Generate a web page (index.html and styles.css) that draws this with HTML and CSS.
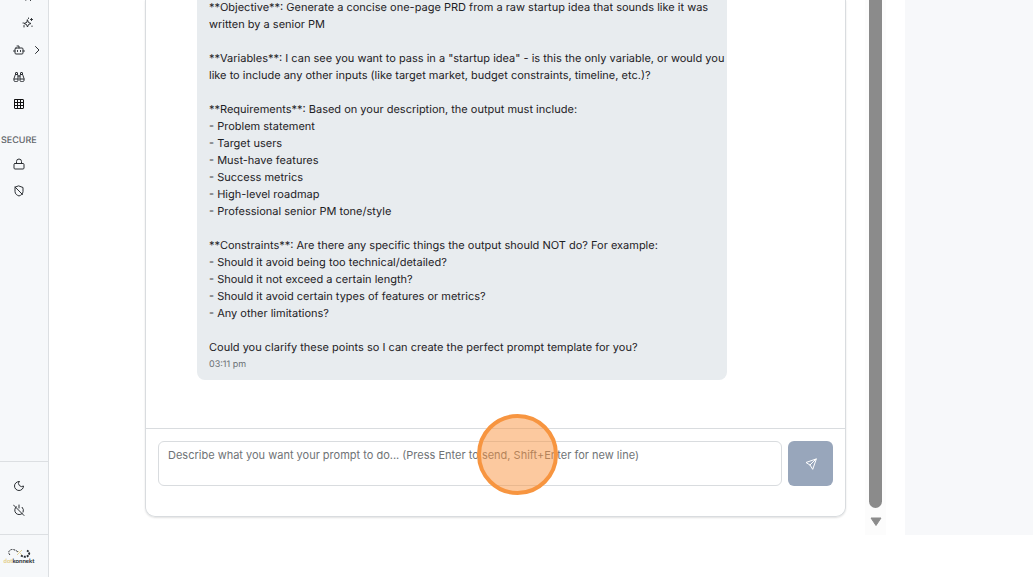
FILE: index.html
```html
<!DOCTYPE html>
<html lang="en">
<head>
<meta charset="utf-8">
<meta name="viewport" content="width=device-width, initial-scale=1">
<title>Prompt builder</title>
<link rel="stylesheet" href="styles.css">
</head>
<body>
<div class="app">
  <aside class="sidebar">
    <nav class="nav" aria-label="Main">
      <a class="nav-item nav-item-sub" href="#" aria-label="Explore"><svg class="icon" viewBox="0 0 24 24"><path d="M14 15l-4 4M7 20h1M17 19v2"/></svg></a>
      <a class="nav-item nav-item-sub" href="#" aria-label="Prompts"><svg class="icon" viewBox="0 0 24 24"><path d="M11 6l2 5 5 2-5 2-2 5-2-5-5-2 5-2z"/><path d="M19 3v4M17 5h4M4 17v3M13 2v1M20 18v1M2 12h1"/></svg></a>
      <a class="nav-item" href="#" aria-label="Agents"><svg class="icon" viewBox="0 0 24 24"><path d="M12 8V4H8"/><rect x="4" y="8" width="16" height="12" rx="2"/><path d="M1 14h3M20 14h3M9 13v2M15 13v2"/></svg><svg class="chevron" viewBox="0 0 24 24"><path d="M9 5l7 7-7 7"/></svg></a>
      <a class="nav-item" href="#" aria-label="Discover"><svg class="icon" viewBox="0 0 24 24"><path d="M10 10h4M19 7V4a1 1 0 0 0-1-1h-2a1 1 0 0 0-1 1v3M5 7V4a1 1 0 0 1 1-1h2a1 1 0 0 1 1 1v3"/><path d="M20 21a2 2 0 0 0 2-2v-3.800c0-2.500-2-3.500-2-6.200a2 2 0 0 0-2-2h-2a2 2 0 0 0-2 2v10a2 2 0 0 0 2 2zM4 21a2 2 0 0 1-2-2v-3.800C2 12.700 4 11.700 4 9a2 2 0 0 1 2-2h2a2 2 0 0 1 2 2v10a2 2 0 0 1-2 2zM2 16h8M14 16h8"/></svg></a>
      <a class="nav-item" href="#" aria-label="Tables"><svg class="icon icon-grid" viewBox="0 0 24 24"><rect x="3" y="3" width="18" height="18" rx="1"/><path d="M3 9h18M3 15h18M9 3v18M15 3v18"/></svg></a>
      <h2 class="nav-title">SECURE</h2>
      <a class="nav-item" href="#" aria-label="Secrets"><svg class="icon" viewBox="0 0 24 24"><rect x="2" y="11" width="20" height="11" rx="2"/><path d="M7 11V7a5 5 0 0 1 10 0v4"/></svg></a>
      <a class="nav-item" href="#" aria-label="Guardrails"><svg class="icon" viewBox="0 0 24 24"><path d="M12 2l8 3v8c0 5-4 7.500-8 9-4-1.500-8-4-8-9V5zM4 4l15 15"/></svg></a>
    </nav>
    <div class="tools">
      <button class="tool" type="button" aria-label="Dark mode"><svg class="icon" viewBox="0 0 24 24"><path d="M12 3a6.500 6.500 0 0 0 9 9 9 9 0 1 1-9-9z"/></svg></button>
      <button class="tool" type="button" aria-label="Sign out"><svg class="icon" viewBox="0 0 24 24"><path d="M12 2v6M18.400 6.600a9 9 0 0 1 2 9.500M6.500 5.500A9 9 0 1 0 18.500 19M1 2l21 21"/></svg></button>
    </div>
    <a class="brand" href="#">
      <svg class="brand-mark" viewBox="0 0 24 10"><path class="mark-dark" d="M3 7C0 4 3 1 6 1.500c2 .3 3.500 1.200 5 2.500"/><path class="mark-gold" d="M10 7l5-5M11 3l4 4"/><path class="mark-dark mark-heavy" d="M14 7.500c3 2 7 1.500 8-1 .6-1.700-.2-3-2-4"/></svg>
      <span class="brand-name"><span class="brand-dot">dot</span>konnekt</span>
    </a>
  </aside>

  <main class="main">
    <div class="workspace">
      <div class="scroll-area">
        <section class="card">
          <div class="messages">
            <article class="bubble">
              <p class="message">**Objective**: Generate a concise one-page PRD from a raw startup idea that sounds like it was
written by a senior PM

**Variables**: I can see you want to pass in a "startup idea" - is this the only variable, or would you like to include any other inputs (like target market, budget constraints, timeline, etc.)?

**Requirements**: Based on your description, the output must include:
- Problem statement
- Target users
- Must-have features
- Success metrics
- High-level roadmap
- Professional senior PM tone/style

**Constraints**: Are there any specific things the output should NOT do? For example:
- Should it avoid being too technical/detailed?
- Should it not exceed a certain length?
- Should it avoid certain types of features or metrics?
- Any other limitations?

Could you clarify these points so I can create the perfect prompt template for you?</p>
              <time class="time">03:11 pm</time>
            </article>
          </div>
          <form class="composer">
            <textarea class="input" aria-label="Prompt description" placeholder="Describe what you want your prompt to do... (Press Enter to send, Shift+Enter for new line)"></textarea>
            <button class="send" type="button" aria-label="Send"><svg class="send-icon" viewBox="0 0 24 24"><path d="M22 2L2 9l8 5 5 8zM22 2L10 14"/></svg></button>
            <span class="pointer"></span>
          </form>
        </section>
      </div>
      <div class="scrollbar">
        <div class="thumb"></div>
        <svg class="arrow" viewBox="0 0 12 10"><path d="M1 1h10L6 8.500z"/></svg>
      </div>
      <aside class="panel"></aside>
    </div>
  </main>
</div>
</body>
</html>
```

FILE: styles.css
```css
* { box-sizing: border-box; }

body {
  margin: 0;
  background: #fff;
  color: #1d2125;
  font-family: Inter, "Liberation Sans", sans-serif;
  font-size: 11px;
  line-height: 17px;
  text-rendering: geometricPrecision;
}

.app {
  display: flex;
  height: 100vh;
  overflow: hidden;
}

.sidebar {
  display: flex;
  flex-direction: column;
  flex: none;
  width: 49px;
  background: #f6f8fa;
  border-right: 1px solid #dcdfe2;
}

.nav {
  flex: 1;
  min-height: 0;
  margin-top: -18px;
}

.nav-item {
  display: flex;
  align-items: center;
  gap: 6px;
  height: 27px;
  padding-left: 13px;
  color: #2b2f33;
}

.nav-item-sub { padding-left: 22px; }

.nav-title {
  margin: 15px 0 1px 1px;
  font-size: 9px;
  font-weight: 500;
  line-height: 17px;
  color: #5f6469;
}

.icon, .chevron, .send-icon {
  width: 12px;
  height: 12px;
  flex: none;
  fill: none;
  stroke: currentColor;
  stroke-width: 2;
  stroke-linecap: round;
  stroke-linejoin: round;
}

.icon-grid { color: #111; }

.tools {
  display: flex;
  flex-direction: column;
  flex: none;
  padding: 12px 0;
  border-top: 1px solid #dcdfe2;
}

.tool {
  display: flex;
  align-items: center;
  height: 24px;
  padding: 0 0 0 13px;
  border: 0;
  background: none;
  color: #2b2f33;
}

.brand {
  display: flex;
  flex-direction: column;
  align-items: center;
  flex: none;
  height: 43px;
  padding: 13px 10px 0 0;
  border-top: 1px solid #dcdfe2;
  color: #25282b;
  text-decoration: none;
}

.brand-mark {
  width: 24px;
  height: 10px;
  fill: none;
  stroke-width: 1;
}

.mark-dark { stroke: #25282b; stroke-dasharray: 2 1; }
.mark-heavy { stroke-width: 2; }
.mark-gold { stroke: #e3d49b; }

.brand-name {
  font-family: Lato, sans-serif;
  font-size: 6px;
  font-weight: 700;
  line-height: 8px;
}

.brand-dot { color: #e3cf8a; }

.main {
  display: flex;
  flex: 1;
  min-width: 0;
  padding-bottom: 42px;
}

.workspace {
  display: flex;
  flex: 1;
  min-width: 0;
}

.scroll-area {
  display: flex;
  flex: 1;
  min-width: 0;
  padding: 0 19px 18px 96px;
}

.card {
  display: flex;
  flex-direction: column;
  flex: 1;
  min-width: 0;
  border: 1px solid #d9dcdf;
  border-top: 0;
  border-radius: 0 0 10px 10px;
  box-shadow: 0 1px 2px rgba(0, 0, 0, 0.12);
}

.messages {
  display: flex;
  flex-direction: column;
  justify-content: flex-end;
  flex: 1;
  min-height: 0;
  overflow: hidden;
  padding: 0 118px 48px 51px;
}

.bubble {
  flex: none;
  padding: 0 2px 6px 12px;
  border-radius: 0 0 8px 8px;
  background: #e8ecef;
}

.message {
  margin: 0;
  white-space: pre-wrap;
}

.time {
  display: block;
  font-size: 9px;
  line-height: 18px;
  color: #6b7075;
}

.composer {
  position: relative;
  display: flex;
  gap: 6px;
  flex: none;
  padding: 12px 12px 30px;
  border-top: 1px solid #d9dcdf;
}

.input {
  flex: 1;
  min-width: 0;
  height: 45px;
  padding: 5px 9px;
  border: 1px solid #d9dcdf;
  border-radius: 6px;
  background: #fff;
  color: #1d2125;
  font: inherit;
  resize: none;
}

.input::placeholder { color: #6f7376; }

.send {
  display: grid;
  place-items: center;
  width: 45px;
  height: 45px;
  padding: 0;
  border: 0;
  border-radius: 6px;
  background: #98a6bb;
  color: #fff;
}

.pointer {
  position: absolute;
  top: -15px;
  left: 331px;
  width: 81px;
  height: 81px;
  border: 4px solid #f79540;
  border-radius: 50%;
  background: rgba(250, 148, 63, 0.5);
  pointer-events: none;
}

.scrollbar {
  display: flex;
  flex-direction: column;
  align-items: center;
  flex: none;
  width: 21px;
  background: #fcfcfc;
}

.thumb {
  flex: 1;
  width: 13px;
  border-radius: 0 0 7px 7px;
  background: #8b8b8b;
}

.arrow {
  width: 12px;
  height: 10px;
  margin: 9px 0 8px;
  fill: #8b8b8b;
  stroke: #8b8b8b;
  stroke-width: 1;
  stroke-linejoin: round;
}

.panel {
  flex: none;
  width: 128px;
  margin-left: 19px;
  background: #f7f8fa;
}
```
